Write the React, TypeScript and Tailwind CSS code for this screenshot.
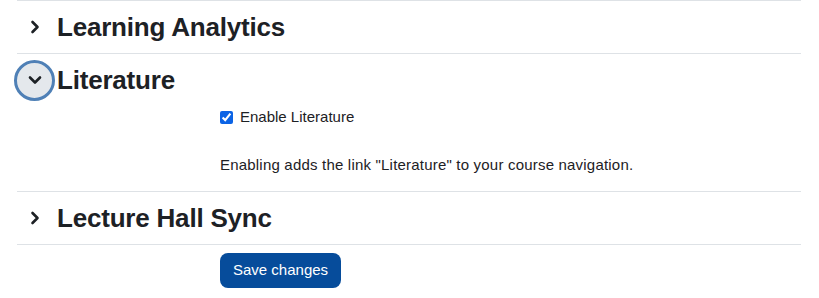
import { useState } from 'react';

interface Section {
  id: string;
  title: string;
}

function ChevronRight() {
  return (
    <svg width="10" height="14" viewBox="0 0 10 14" fill="none">
      <path d="M2.5 2 L7.5 7 L2.5 12" stroke="#1d2125" strokeWidth="2.6" strokeLinecap="round" strokeLinejoin="round" />
    </svg>
  );
}

function ChevronDown() {
  return (
    <svg width="14" height="10" viewBox="0 0 14 10" fill="none">
      <path d="M2 2.5 L7 7.5 L12 2.5" stroke="#1d2125" strokeWidth="2.6" strokeLinecap="round" strokeLinejoin="round" />
    </svg>
  );
}

export default function App() {
  const [open, setOpen] = useState<string>('literature');
  const [enabled, setEnabled] = useState(true);

  const sections: Section[] = [
    { id: 'analytics', title: 'Learning Analytics' },
    { id: 'literature', title: 'Literature' },
    { id: 'lecturehall', title: 'Lecture Hall Sync' },
  ];

  return (
    <div className="min-h-screen bg-white text-[#1d2125] font-['Liberation_Sans',Arial,sans-serif]">
      <div className="pl-[17px] pr-[18px]">
        {sections.map((section) => {
          const isOpen = open === section.id;
          return (
            <div key={section.id} className="border-t border-[#dee2e6]">
              <div className="flex h-[52px] items-center">
                <button
                  onClick={() => setOpen(isOpen ? '' : section.id)}
                  className={
                    isOpen
                      ? '-ml-[3px] flex h-[41px] w-[41px] items-center justify-center rounded-full border-[3px] border-[#4f80b6] bg-[#e4e8ec]'
                      : '-ml-[3px] flex h-[41px] w-[41px] items-center justify-center rounded-full border-[3px] border-transparent'
                  }
                >
                  {isOpen ? <ChevronDown /> : <ChevronRight />}
                </button>
                <h3 className="ml-[2px] text-[26px] font-bold leading-none tracking-[-0.2px]">{section.title}</h3>
              </div>

              {isOpen && (
                <div className="pl-[203px] pb-[15px] text-[15px] leading-[22px]">
                  <label className="flex items-center">
                    <input
                      type="checkbox"
                      checked={enabled}
                      onChange={(e) => setEnabled(e.target.checked)}
                      className="h-[13px] w-[13px] accent-[#0b63e5]"
                    />
                    <span className="ml-[7px]">Enable Literature</span>
                  </label>
                  <p className="mt-[26px] tracking-[0.2px]">Enabling adds the link "Literature" to your course navigation.</p>
                </div>
              )}
            </div>
          );
        })}
        <div className="border-t border-[#dee2e6] pl-[203px] pt-[8px]">
          <button className="h-[35px] rounded-[8px] bg-[#064c9b] px-[13px] text-[15px] text-white">
            Save changes
          </button>
        </div>
      </div>
    </div>
  );
}
